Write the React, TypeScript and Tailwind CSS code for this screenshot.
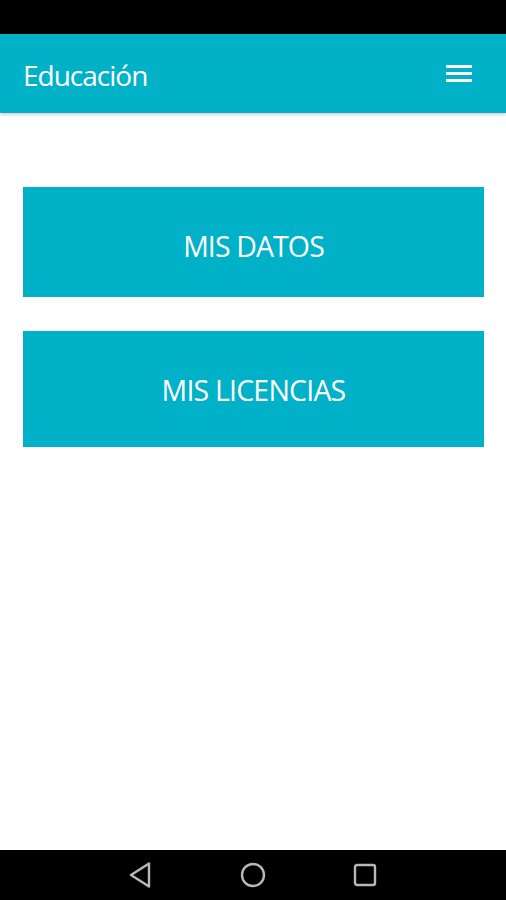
import React from 'react';

const font = { fontFamily: '"Open Sans", "Noto Sans", sans-serif' };

export default function App() {
  return (
    <div className="w-[506px] h-[900px] flex flex-col bg-white overflow-hidden" style={font}>
      {/* Status bar */}
      <div className="h-[34px] bg-black shrink-0" />

      {/* App bar */}
      <header className="h-[79px] shrink-0 bg-[#00b1c8] flex items-center justify-between pl-[23px] pr-[34px] shadow-[0_2px_3px_rgba(0,0,0,0.18)] relative z-10">
        <h1 className="text-white text-[28px] leading-none tracking-[-1px] pt-[2px]">Educación</h1>
        <button type="button" className="flex flex-col gap-[4px] w-[26px]">
          <span className="block h-[3px] bg-white" />
          <span className="block h-[3px] bg-white" />
          <span className="block h-[3px] bg-white" />
        </button>
      </header>

      {/* Content */}
      <main className="flex-1 px-[23px] pt-[74px] flex flex-col gap-[34px]">
        <button
          type="button"
          className="h-[110px] w-[461px] bg-[#00b1c8] text-white text-[28.5px] leading-none tracking-[-0.9px] flex items-center justify-center pt-[8px]"
        >
          MIS DATOS
        </button>
        <button
          type="button"
          className="h-[116px] w-[461px] bg-[#00b1c8] text-white text-[28.5px] leading-none tracking-[-0.8px] flex items-center justify-center pt-[2px]"
        >
          MIS LICENCIAS
        </button>
      </main>

      {/* Nav bar */}
      <nav className="h-[50px] shrink-0 bg-black flex items-center justify-center gap-[86px] pb-[1px]">
        <svg width="26" height="26" viewBox="0 0 26 26" fill="none" stroke="#b8b8b8" strokeWidth="2.4" strokeLinejoin="round">
          <path d="M21 1.5 L3 13 L21 24.5 Z" />
        </svg>
        <svg width="26" height="26" viewBox="0 0 26 26" fill="none" stroke="#b8b8b8" strokeWidth="2.4">
          <circle cx="13" cy="13" r="11" />
        </svg>
        <svg width="26" height="26" viewBox="0 0 26 26" fill="none" stroke="#b8b8b8" strokeWidth="2.4">
          <rect x="3" y="3" width="20" height="20" rx="2" />
        </svg>
      </nav>
    </div>
  );
}
